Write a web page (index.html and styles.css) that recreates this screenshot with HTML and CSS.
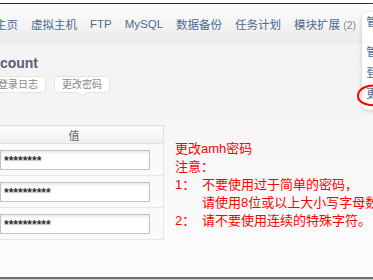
FILE: index.html
```html
<!DOCTYPE html>
<html lang="zh-CN">
<head>
    <meta charset="UTF-8">
    <meta name="viewport" content="width=device-width, initial-scale=1.0">
    <title>AMH - Account</title>
    <link rel="stylesheet" href="styles.css">
</head>
<body>
    <div class="topline"></div>

    <!-- Menu principal -->
    <ul class="nav">
        <li>主页</li>
        <li>虚拟主机</li>
        <li>FTP</li>
        <li>MySQL</li>
        <li>数据备份</li>
        <li>任务计划</li>
        <li>模块扩展 <span class="num">(2)</span></li>
        <li class="menu">
            <span>管理</span>
            <ul class="dropdown">
                <li>管理员</li>
                <li>登录日志</li>
                <li>更改密码</li>
            </ul>
        </li>
    </ul>

    <div class="content">
        <h2>Account</h2>
        <div class="tabs">
            <a class="tab">登录日志</a>
            <a class="tab active">更改密码</a>
        </div>

        <div class="main">
            <table class="form-table">
                <tr><th>值</th></tr>
                <tr><td><input type="text" value="********" readonly></td></tr>
                <tr><td><input type="text" value="**********" readonly></td></tr>
                <tr><td><input type="text" value="**********" readonly></td></tr>
            </table>

            <div class="notes">
                <p>更改amh密码</p>
                <p>注意：</p>
                <div class="note-row"><span>1：</span><span>不要使用过于简单的密码，<br>请使用8位或以上大小写字母数字组合。</span></div>
                <div class="note-row"><span>2：</span><span>请不要使用连续的特殊字符。</span></div>
            </div>
        </div>
    </div>

    <div class="footer"></div>

    <!-- marque rouge -->
    <svg class="mark" width="30" height="26" viewBox="0 0 30 26">
        <path d="M24 3 C14 1 3 5 3 13 C3 20 13 23 22 22 C26 21.5 29 20 30 19" fill="none" stroke="#f00" stroke-width="2" stroke-linecap="round"/>
    </svg>
</body>
</html>
```

FILE: styles.css
```css
* {
    margin: 0;
    padding: 0;
    box-sizing: border-box;
}

body {
    height: 280px;
    display: flex;
    flex-direction: column;
    overflow: hidden;
    background: #fff;
    font-family: "Liberation Sans", "Noto Sans CJK SC", sans-serif;
    position: relative;
}

.topline {
    height: 4px;
    border-bottom: 1px solid #333;
    flex-shrink: 0;
}

.nav {
    display: flex;
    align-items: center;
    gap: 13px;
    height: 39px;
    flex-shrink: 0;
    margin-left: -5px;
    list-style: none;
    background: linear-gradient(#fdfdfd, #ebebeb);
    font-size: 11.5px;
    color: #4d6b8e;
    white-space: nowrap;
}

.nav .num {
    font-size: 10.5px;
    color: #8a8a8a;
}

.nav .menu {
    align-self: flex-start;
    margin-top: 8px;
    margin-left: -7px;
    padding: 0 4px 5px;
    line-height: 20px;
    background: #fff;
    border-radius: 6px;
    box-shadow: 0 1px 4px rgba(0,0,0,0.18);
    position: relative;
    z-index: 2;
}

.dropdown {
    list-style: none;
    margin-top: 10px;
    line-height: 21px;
}

.content {
    flex: 1;
    padding-top: 11px;
    background: linear-gradient(#f2f2f2, #fdfdfd);
}

h2 {
    margin-left: -18px;
    font-size: 14px;
    line-height: 18px;
    color: #5c6078;
}

.tabs {
    display: flex;
    gap: 8px;
    margin: 4px 0 0 -10px;
}

.tab {
    position: relative;
    height: 17px;
    padding: 0 7px;
    font-size: 10px;
    line-height: 15px;
    color: #888;
    background: #fff;
    border: 1px solid #e4e4e4;
    border-radius: 4px;
}

.tab.active::after {
    content: "";
    position: absolute;
    left: 50%;
    bottom: -4px;
    margin-left: -3px;
    width: 6px;
    height: 6px;
    background: #fff;
    border-right: 1px solid #e4e4e4;
    border-bottom: 1px solid #e4e4e4;
    transform: rotate(45deg);
}

.main {
    display: flex;
    align-items: flex-start;
    margin-top: 32px;
}

.form-table {
    width: 178px;
    margin-left: -16px;
    border-collapse: collapse;
    background: #fafafa;
    flex-shrink: 0;
}

.form-table th {
    height: 18px;
    font-size: 11px;
    font-weight: normal;
    color: #666;
    background: linear-gradient(#fff, #ededed);
    border: 1px solid #e0e0e0;
}

.form-table td {
    padding: 6px 13px 5px 15px;
    border: 1px solid #e6e6e6;
}

.form-table input {
    display: block;
    width: 150px;
    height: 20px;
    padding: 2px 3px 0;
    font-family: "Liberation Sans", sans-serif;
    font-size: 12px;
    font-weight: bold;
    color: #333;
    background: #fff;
    border: 1px solid #b9c3cf;
    box-shadow: inset 0 2px 2px rgba(0,0,0,0.08);
    outline: none;
}

.notes {
    margin: 15px 0 0 11px;
    font-size: 13px;
    line-height: 18px;
    color: #f00;
    white-space: nowrap;
}

.note-row {
    display: grid;
    grid-template-columns: 27px auto;
}

.footer {
    height: 3px;
    flex-shrink: 0;
    border-top: 2px solid #6e6e6e;
    background: #d0d0d0;
}

.mark {
    position: absolute;
    left: 355px;
    top: 83px;
    z-index: 3;
}
```
